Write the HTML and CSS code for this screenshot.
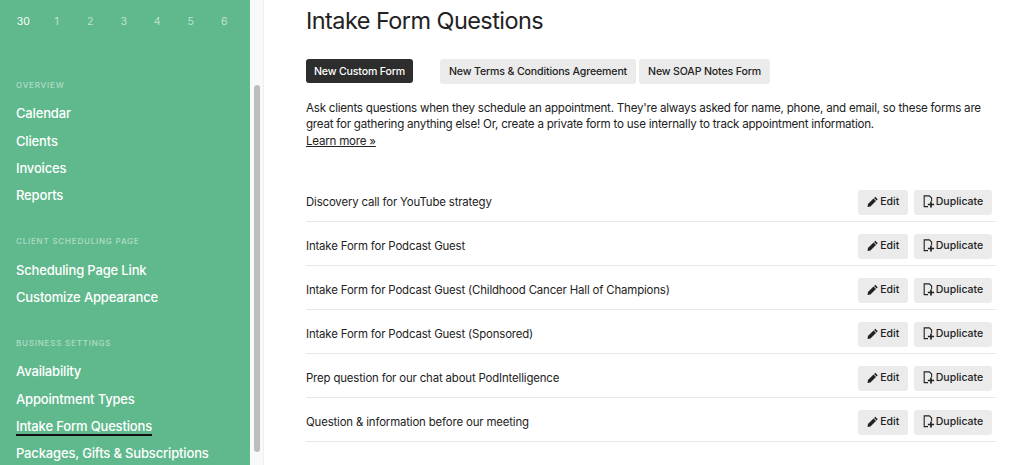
FILE: index.html
```html
<!DOCTYPE html>
<html lang="en">
<head>
<meta charset="utf-8">
<title>Intake Form Questions</title>
<link rel="stylesheet" href="styles.css">
</head>
<body>
<div class="app">
  <aside class="sidebar">
    <div class="days">
      <span class="day today">30</span><span class="day">1</span><span class="day">2</span><span class="day">3</span><span class="day">4</span><span class="day">5</span><span class="day">6</span>
    </div>
    <nav class="group group-overview">
      <h2 class="group-title">OVERVIEW</h2>
      <a class="nav-link">Calendar</a>
      <a class="nav-link">Clients</a>
      <a class="nav-link">Invoices</a>
      <a class="nav-link">Reports</a>
    </nav>
    <nav class="group">
      <h2 class="group-title">CLIENT SCHEDULING PAGE</h2>
      <a class="nav-link">Scheduling Page Link</a>
      <a class="nav-link">Customize Appearance</a>
    </nav>
    <nav class="group">
      <h2 class="group-title">BUSINESS SETTINGS</h2>
      <a class="nav-link">Availability</a>
      <a class="nav-link">Appointment Types</a>
      <a class="nav-link"><span class="current">Intake Form Questions</span></a>
      <a class="nav-link">Packages, Gifts &amp; Subscriptions</a>
    </nav>
  </aside>
  <div class="scrolltrack"><div class="scrollthumb"></div></div>
  <main class="main">
    <h1 class="title">Intake Form Questions</h1>
    <div class="actions">
      <button class="btn btn-dark">New Custom Form</button>
      <div class="actions-right">
        <button class="btn btn-grey">New Terms &amp; Conditions Agreement</button>
        <button class="btn btn-grey">New SOAP Notes Form</button>
      </div>
    </div>
    <p class="intro">Ask clients questions when they schedule an appointment. They're always asked for name, phone, and email, so these forms are<br>great for gathering anything else! Or, create a private form to use internally to track appointment information.<br><a class="learn">Learn more »</a></p>
    <ul class="forms">
      <li class="form-row"><span class="form-name">Discovery call for YouTube strategy</span><span class="row-btns"><button class="btn-sm btn-edit"><svg class="ic" viewBox="0 0 12 12"><path d="M8.6 0.8 11.2 3.4 10 4.6 7.4 2Z M6.8 2.6 9.4 5.2 3.6 11 0.6 11.4 1 8.4Z"/></svg>Edit</button><button class="btn-sm btn-dup"><svg class="ic-dup" viewBox="0 0 12 13"><path class="doc" d="M5 11.6H1.2V0.9H6.4L8.6 3.1V6"/><path class="plus" d="M8 6.4V12.6M4.9 9.5H11.1"/></svg>Duplicate</button></span></li>
      <li class="form-row"><span class="form-name">Intake Form for Podcast Guest</span><span class="row-btns"><button class="btn-sm btn-edit"><svg class="ic" viewBox="0 0 12 12"><path d="M8.6 0.8 11.2 3.4 10 4.6 7.4 2Z M6.8 2.6 9.4 5.2 3.6 11 0.6 11.4 1 8.4Z"/></svg>Edit</button><button class="btn-sm btn-dup"><svg class="ic-dup" viewBox="0 0 12 13"><path class="doc" d="M5 11.6H1.2V0.9H6.4L8.6 3.1V6"/><path class="plus" d="M8 6.4V12.6M4.9 9.5H11.1"/></svg>Duplicate</button></span></li>
      <li class="form-row"><span class="form-name">Intake Form for Podcast Guest (Childhood Cancer Hall of Champions)</span><span class="row-btns"><button class="btn-sm btn-edit"><svg class="ic" viewBox="0 0 12 12"><path d="M8.6 0.8 11.2 3.4 10 4.6 7.4 2Z M6.8 2.6 9.4 5.2 3.6 11 0.6 11.4 1 8.4Z"/></svg>Edit</button><button class="btn-sm btn-dup"><svg class="ic-dup" viewBox="0 0 12 13"><path class="doc" d="M5 11.6H1.2V0.9H6.4L8.6 3.1V6"/><path class="plus" d="M8 6.4V12.6M4.9 9.5H11.1"/></svg>Duplicate</button></span></li>
      <li class="form-row"><span class="form-name">Intake Form for Podcast Guest (Sponsored)</span><span class="row-btns"><button class="btn-sm btn-edit"><svg class="ic" viewBox="0 0 12 12"><path d="M8.6 0.8 11.2 3.4 10 4.6 7.4 2Z M6.8 2.6 9.4 5.2 3.6 11 0.6 11.4 1 8.4Z"/></svg>Edit</button><button class="btn-sm btn-dup"><svg class="ic-dup" viewBox="0 0 12 13"><path class="doc" d="M5 11.6H1.2V0.9H6.4L8.6 3.1V6"/><path class="plus" d="M8 6.4V12.6M4.9 9.5H11.1"/></svg>Duplicate</button></span></li>
      <li class="form-row"><span class="form-name">Prep question for our chat about PodIntelligence</span><span class="row-btns"><button class="btn-sm btn-edit"><svg class="ic" viewBox="0 0 12 12"><path d="M8.6 0.8 11.2 3.4 10 4.6 7.4 2Z M6.8 2.6 9.4 5.2 3.6 11 0.6 11.4 1 8.4Z"/></svg>Edit</button><button class="btn-sm btn-dup"><svg class="ic-dup" viewBox="0 0 12 13"><path class="doc" d="M5 11.6H1.2V0.9H6.4L8.6 3.1V6"/><path class="plus" d="M8 6.4V12.6M4.9 9.5H11.1"/></svg>Duplicate</button></span></li>
      <li class="form-row"><span class="form-name">Question &amp; information before our meeting</span><span class="row-btns"><button class="btn-sm btn-edit"><svg class="ic" viewBox="0 0 12 12"><path d="M8.6 0.8 11.2 3.4 10 4.6 7.4 2Z M6.8 2.6 9.4 5.2 3.6 11 0.6 11.4 1 8.4Z"/></svg>Edit</button><button class="btn-sm btn-dup"><svg class="ic-dup" viewBox="0 0 12 13"><path class="doc" d="M5 11.6H1.2V0.9H6.4L8.6 3.1V6"/><path class="plus" d="M8 6.4V12.6M4.9 9.5H11.1"/></svg>Duplicate</button></span></li>
    </ul>
  </main>
</div>
</body>
</html>
```
FILE: styles.css
```css
* { box-sizing: border-box; }
html, body { margin: 0; padding: 0; height: 100%; overflow: hidden; background: #fff; }
body { font-family: Inter, "Liberation Sans", sans-serif; color: #1f1f1f; }
.app { display: flex; width: 1023px; height: 465px; overflow: hidden; }

.sidebar { width: 250px; flex: none; background: #60b98d; padding: 14px 0 0 16px; color: #fff; }
.days { display: flex; height: 14px; align-items: center; margin-left: -9.5px; }
.day { width: 33.5px; text-align: center; font-size: 10.5px; color: rgba(255,255,255,.6); }
.today { color: #fff; }
.group { display: flex; flex-direction: column; margin-bottom: 25.7px; }
.group-overview { margin-top: 51px; }
.group-title { margin: 0 0 9.4px; height: 12px; line-height: 12px; font-size: 8px; font-weight: 500; letter-spacing: .8px; color: rgba(255,255,255,.5); }
.nav-link { height: 27.3px; line-height: 27px; font-size: 13px; letter-spacing: -.16px; font-weight: 500; color: #fff; white-space: nowrap; }
.current { display: inline-block; height: 20px; line-height: 20px; margin-top: 3px; vertical-align: top; border-bottom: 2px solid #111; }

.scrolltrack { width: 13px; flex: none; margin-left: 1px; background: #f9f9f9; border-right: 1px solid #efefef; padding: 85px 3px 0; }
.scrollthumb { width: 6px; height: 367px; border-radius: 3px; background: #bdbdbd; }

.main { flex: none; width: 690px; margin-left: 42px; }
.title { margin: 8px 0 0; font-size: 23.5px; line-height: 26px; font-weight: 400; letter-spacing: -.57px; color: #222; }
.actions { display: flex; align-items: center; margin-top: 24px; height: 26px; }
.actions-right { display: flex; gap: 3px; margin-left: 27px; }
.btn { font: 500 10.6px Inter, "Liberation Sans", sans-serif; letter-spacing: -.16px; border: 0; border-radius: 3px; white-space: nowrap; }
.btn-dark { background: #2d2d2d; color: #fff; height: 24px; width: 107px; padding: 0; }
.btn-grey { background: #ebebeb; color: #222; height: 25px; padding: 0 9px; }
.intro { margin: 16px 0 0; font-size: 11.6px; line-height: 16.4px; letter-spacing: -.24px; color: #222; white-space: nowrap; }
.learn { text-decoration: underline; }
.forms { list-style: none; margin: 29px 0 0; padding: 0; }
.form-row { display: flex; align-items: center; justify-content: space-between; height: 44px; border-bottom: 1px solid #e8e8e8; padding: 5px 4px 0 0; }
.form-name { font-size: 11.4px; letter-spacing: -.15px; color: #222; }
.row-btns { display: flex; gap: 6px; }
.btn-sm { display: flex; align-items: center; justify-content: center; height: 25px; border: 0; border-radius: 3px; background: #ebebeb; color: #222; font: 500 10.5px Inter, "Liberation Sans", sans-serif; padding: 0 0 1px; }
.btn-edit { width: 50px; }
.btn-dup { width: 78px; }
.ic { width: 11.5px; height: 11.5px; margin-right: 2px; fill: #222; }
.ic-dup { width: 12px; height: 13px; margin-right: 1px; fill: none; stroke: #222; }
.doc { stroke-width: 1.1; }
.plus { stroke-width: 1.7; }
```
